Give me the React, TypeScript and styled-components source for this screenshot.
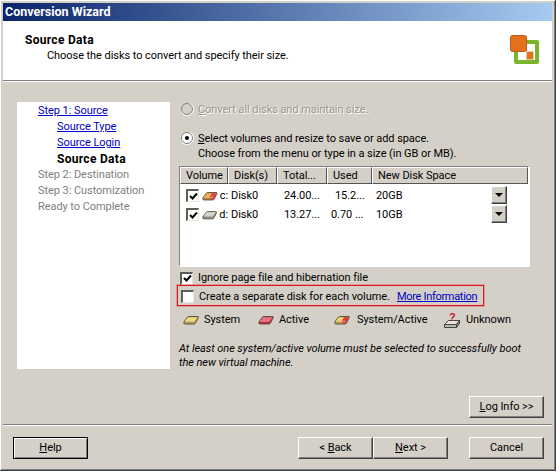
import * as React from 'react'
import styled, { createGlobalStyle } from 'styled-components'

const Global = createGlobalStyle`
html, body {
	margin: 0;
	padding: 0;
	background: #fff;
}
* {
	box-sizing: border-box;
}
`

const Frame = styled.div`
width: 556px;
height: 471px;
padding: 3px;
display: flex;
flex-direction: column;
background: #d4d0c8;
border-right: 1px solid #404040;
border-bottom: 1px solid #404040;
box-shadow: inset 1px 1px 0 #fff, inset -1px -1px 0 #808080;
font-family: Roboto, "Noto Sans", sans-serif;
font-size: 11px;
letter-spacing: -0.06px;
line-height: 14px;
color: #000;
`

const TitleBar = styled.div`
height: 18px;
flex: none;
padding-left: 2px;
display: flex;
align-items: center;
background: linear-gradient(90deg, #0a246a, #a6caf0);
color: #fff;
font-weight: 700;
font-size: 12.5px;
letter-spacing: 0;
`

const Header = styled.div`
height: 60px;
flex: none;
display: flex;
justify-content: space-between;
padding: 12px 13px 0 22px;
background: #fff;
border-bottom: 1px solid #808080;
`

const HeaderTitle = styled.div`
font-weight: 700;
font-size: 12px;
letter-spacing: 0.3px;
`

const HeaderSub = styled.div`
padding: 2px 0 0 22px;
`

const Logo = styled.svg`
width: 29px;
height: 29px;
margin-top: 2px;
`

const Body = styled.div`
flex: 1;
display: flex;
gap: 9px;
padding: 20px 0 0 14px;
border-top: 1px solid #fff;
`

const Nav = styled.div`
width: 153px;
height: 267px;
flex: none;
padding: 1px 0 0 21px;
display: flex;
flex-direction: column;
background: #fff;
`

const NavItem = styled.div<{ $sub?: boolean; $kind: 'link' | 'current' | 'off' }>`
height: 16px;
display: flex;
align-items: center;
padding-left: ${p => (p.$sub ? 19 : 0)}px;
color: ${p => (p.$kind === 'link' ? '#0000c8' : p.$kind === 'off' ? '#808080' : '#000')};
font-weight: ${p => (p.$kind === 'current' ? 700 : 400)};
font-size: ${p => (p.$kind === 'current' ? 12 : 11)}px;
letter-spacing: ${p => (p.$kind === 'current' ? '0.3px' : '-0.06px')};
text-decoration: ${p => (p.$kind === 'link' ? 'underline' : 'none')};
`

const Main = styled.div`
width: 352px;
display: flex;
flex-direction: column;
`

const RadioRow = styled.div<{ $off?: boolean; $top: number }>`
display: flex;
gap: 5px;
margin-top: ${p => p.$top}px;
padding-left: 2px;
color: ${p => (p.$off ? '#9a978f' : '#000')};
text-shadow: ${p => (p.$off ? '1px 1px 0 #fff' : 'none')};
`

const RadioDot = styled.span<{ $on?: boolean; $off?: boolean }>`
width: 12px;
height: 12px;
flex: none;
margin-top: 1px;
border-radius: 50%;
background: ${p => (p.$off ? '#d4d0c8' : '#fff')};
border: 1px solid #808080;
box-shadow: 0 1px 0 #fff, 1px 0 0 #fff;
display: flex;
align-items: center;
justify-content: center;
&::after {
	content: "";
	width: 4px;
	height: 4px;
	border-radius: 50%;
	background: ${p => (p.$on ? '#000' : 'transparent')};
}
`

const RadioText = styled.div`
line-height: 15px;
`

const Table = styled.div`
width: 350px;
height: 100px;
margin-top: 5px;
flex: none;
background: #fff;
border: 1px solid #808080;
border-right-color: #fff;
border-bottom-color: #fff;
box-shadow: 1px 1px 0 #fff;
`

const TableHead = styled.div`
display: grid;
grid-template-columns: 48px 49px 50px 45px 1fr;
height: 17px;
background: #d4d0c8;
`

const HeadCell = styled.div`
padding-left: 5px;
display: flex;
align-items: center;
border-top: 1px solid #fff;
border-left: 1px solid #fff;
border-right: 1px solid #555;
border-bottom: 1px solid #555;
`

const TableRow = styled.div`
display: grid;
grid-template-columns: 48px 49px 50px 45px 1fr;
height: 19px;
align-items: center;
`

const RowsWrap = styled.div`
padding-top: 2px;
`

const VolumeCell = styled.div`
display: flex;
align-items: center;
gap: 3px;
padding-left: 6px;
white-space: nowrap;
`

const DiskLabel = styled.span`
margin-left: -1px;
`

const Cell = styled.div<{ $pad?: number }>`
padding-left: ${p => p.$pad ?? 6}px;
white-space: nowrap;
`

const SizeCell = styled.div`
display: flex;
align-items: center;
justify-content: space-between;
padding: 0 21px 0 4px;
`

const Spin = styled.div`
width: 16px;
height: 18px;
margin-top: -2px;
display: flex;
align-items: center;
justify-content: center;
background: #d4d0c8;
border-top: 1px solid #fff;
border-left: 1px solid #fff;
border-right: 1px solid #404040;
border-bottom: 1px solid #404040;
box-shadow: inset -1px -1px 0 #808080;
&::after {
	content: "";
	border-left: 4px solid transparent;
	border-right: 4px solid transparent;
	border-top: 4px solid #000;
}
`

const CheckBox = styled.span`
width: 13px;
height: 13px;
flex: none;
background: #fff;
border: 2px solid #5f5d58;
border-right: 1px solid #e8e6e0;
border-bottom: 1px solid #e8e6e0;
display: flex;
align-items: center;
justify-content: center;
`

const Tick = styled.svg`
width: 9px;
height: 9px;
`

const CheckRow = styled.div`
display: flex;
align-items: center;
gap: 5px;
height: 14px;
margin: 5px 0 0 1px;
`

const Highlight = styled.div`
width: 307px;
height: 21px;
margin: 0 0 0 -2px;
padding: 2px 0 0 3px;
display: flex;
align-items: center;
gap: 5px;
white-space: nowrap;
border: 1px solid #e0141c;
box-shadow: 0 0 0 1px rgba(224, 60, 60, 0.35);
`

const MoreLink = styled.span`
margin-left: 2px;
color: #0000c8;
letter-spacing: -0.3px;
text-decoration: underline;
`

const Legend = styled.div`
display: grid;
grid-template-columns: 75px 76px 110px 1fr;
margin: 6px 0 0 4px;
`

const LegendItem = styled.div<{ $gap?: number }>`
display: flex;
align-items: center;
gap: ${p => p.$gap ?? 5}px;
height: 16px;
`

const Note = styled.div`
margin-top: 14px;
font-style: italic;
line-height: 14px;
`

const LogRow = styled.div`
height: 54px;
flex: none;
padding: 0 8px 6px 0;
display: flex;
justify-content: flex-end;
align-items: flex-end;
`

const Footer = styled.div`
height: 44px;
flex: none;
padding: 12px 8px 0 10px;
display: flex;
border-top: 1px solid #808080;
box-shadow: inset 0 1px 0 #fff;
`

const Button = styled.div<{ $default?: boolean; $gap?: number }>`
width: 75px;
height: 22px;
flex: none;
display: flex;
align-items: center;
justify-content: center;
white-space: pre;
margin-left: ${p => p.$gap ?? 0}px;
background: #d4d0c8;
border-top: 1px solid ${p => (p.$default ? '#000' : '#fff')};
border-left: 1px solid ${p => (p.$default ? '#000' : '#fff')};
border-right: 1px solid ${p => (p.$default ? '#000' : '#404040')};
border-bottom: 1px solid ${p => (p.$default ? '#000' : '#404040')};
box-shadow: ${p =>
	p.$default
		? 'inset 1px 1px 0 #fff, inset -1px -1px 0 #808080'
		: 'inset -1px -1px 0 #808080'};
`

interface DiskProps {
	top: string
	front: string
	end?: string
}

// flat rounded slab, the end colour is the red tip on system/active volumes
const Disk = ({ top, front, end }: DiskProps) => (
	<svg width="16" height="10" viewBox="0 0 16 10">
		<path d="M1 8.5Q.5 7 1.5 6L4.5 2Q5 1.5 6 1.5H15L15.5 2 12.5 8Q12 9 11 9H2Q1.2 9 1 8.5Z" fill={ front } stroke="#5a5440" />
		<path d="M2 5.8 5 2.2H14.6L12 5.8Z" fill={ top } />
		{ end && <path d="M8 5.8 10 2.2H14.8L12 8.4H9Z" fill={ end } /> }
		<path d="M2 6.2H11.5" stroke="#fff" strokeOpacity=".5" />
	</svg>
)

const UnknownDisk = () => (
	<svg width="17" height="17" viewBox="0 0 17 17">
		<path d="M.5 12.5 4.5 8.5H15.5L12.5 12.5Z" fill="#e8e6e0" stroke="#444" />
		<path d="M.5 12.5H12.5V15.5H.5Z" fill="#bbb8b0" stroke="#444" />
		<path d="M12.5 12.5 15.5 8.5V11.5L12.5 15.5Z" fill="#8a8880" stroke="#444" />
		<text x="5" y="9" fontSize="11" fontWeight="700" fill="#c8202c" fontFamily="Liberation Sans, sans-serif">?</text>
	</svg>
)

const CheckTick = () => (
	<Tick viewBox="0 0 9 9">
		<path d="M1 4 3.5 6.5 8 1.5" fill="none" stroke="#000" strokeWidth="2" />
	</Tick>
)

export default function App() {
	return (
		<Frame>
			<Global />
			<TitleBar>Conversion Wizard</TitleBar>
			<Header>
				<div>
					<HeaderTitle>Source Data</HeaderTitle>
					<HeaderSub>Choose the disks to convert and specify their size.</HeaderSub>
				</div>
				<Logo viewBox="0 0 29 29">
					<rect x="4" y="5" width="25" height="24" rx="2" fill="#7ab52c" />
					<rect x="8" y="16" width="17" height="9" fill="#fff" />
					<rect x="17" y="9" width="8" height="10" fill="#fff" />
					<rect x="16.5" y="16.5" width="7" height="8" fill="#e2761e" stroke="#e8c8a8" />
					<rect x="0.5" y="0.5" width="16" height="16" rx="2" fill="#e2701c" stroke="#c06018" />
				</Logo>
			</Header>
			<Body>
				<Nav>
					<NavItem $kind="link">Step 1: Source</NavItem>
					<NavItem $kind="link" $sub>Source Type</NavItem>
					<NavItem $kind="link" $sub>Source Login</NavItem>
					<NavItem $kind="current" $sub>Source Data</NavItem>
					<NavItem $kind="off">Step 2: Destination</NavItem>
					<NavItem $kind="off">Step 3: Customization</NavItem>
					<NavItem $kind="off">Ready to Complete</NavItem>
				</Nav>
				<Main>
					<RadioRow $off $top={ 0 }>
						<RadioDot $off />
						<RadioText><u>C</u>onvert all disks and maintain size.</RadioText>
					</RadioRow>
					<RadioRow $top={ 14 }>
						<RadioDot $on />
						<RadioText>
							<u>S</u>elect volumes and resize to save or add space.<br />
							Choose from the menu or type in a size (in GB or MB).
						</RadioText>
					</RadioRow>
					<Table>
						<TableHead>
							<HeadCell>Volume</HeadCell>
							<HeadCell>Disk(s)</HeadCell>
							<HeadCell>Total...</HeadCell>
							<HeadCell>Used</HeadCell>
							<HeadCell>New Disk Space</HeadCell>
						</TableHead>
						<RowsWrap>
							<TableRow>
								<VolumeCell>
									<CheckBox><CheckTick /></CheckBox>
									<Disk top="#f0b050" front="#c88a30" end="#e04048" />
									<DiskLabel>c:</DiskLabel>
								</VolumeCell>
								<Cell $pad={ 3 }>Disk0</Cell>
								<Cell $pad={ 7 }>24.00...</Cell>
								<Cell $pad={ 8 }>15.2...</Cell>
								<SizeCell>20GB<Spin /></SizeCell>
							</TableRow>
							<TableRow>
								<VolumeCell>
									<CheckBox><CheckTick /></CheckBox>
									<Disk top="#d8d8d0" front="#908e86" />
									<DiskLabel>d:</DiskLabel>
								</VolumeCell>
								<Cell $pad={ 3 }>Disk0</Cell>
								<Cell $pad={ 7 }>13.27...</Cell>
								<Cell $pad={ 4 }>0.70 ...</Cell>
								<SizeCell>10GB<Spin /></SizeCell>
							</TableRow>
						</RowsWrap>
					</Table>
					<CheckRow>
						<CheckBox><CheckTick /></CheckBox>
						Ignore page file and hibernation file
					</CheckRow>
					<Highlight>
						<CheckBox />
						Create a separate disk for each volume.
						<MoreLink>More Information</MoreLink>
					</Highlight>
					<Legend>
						<LegendItem><Disk top="#ecdc80" front="#b8a048" />System</LegendItem>
						<LegendItem><Disk top="#e87080" front="#c02838" />Active</LegendItem>
						<LegendItem $gap={ 7 }><Disk top="#f0d468" front="#c89838" end="#d83838" />System/Active</LegendItem>
						<LegendItem><UnknownDisk />Unknown</LegendItem>
					</Legend>
					<Note>
						At least one system/active volume must be selected to successfully boot<br />
						the new virtual machine.
					</Note>
				</Main>
			</Body>
			<LogRow>
				<Button><u>L</u>og Info &gt;&gt;</Button>
			</LogRow>
			<Footer>
				<Button $default><u>H</u>elp</Button>
				<Button $gap={ 210 }>&lt; <u>B</u>ack</Button>
				<Button><u>N</u>ext &gt;</Button>
				<Button $gap={ 21 }>Cancel</Button>
			</Footer>
		</Frame>
	)
}
